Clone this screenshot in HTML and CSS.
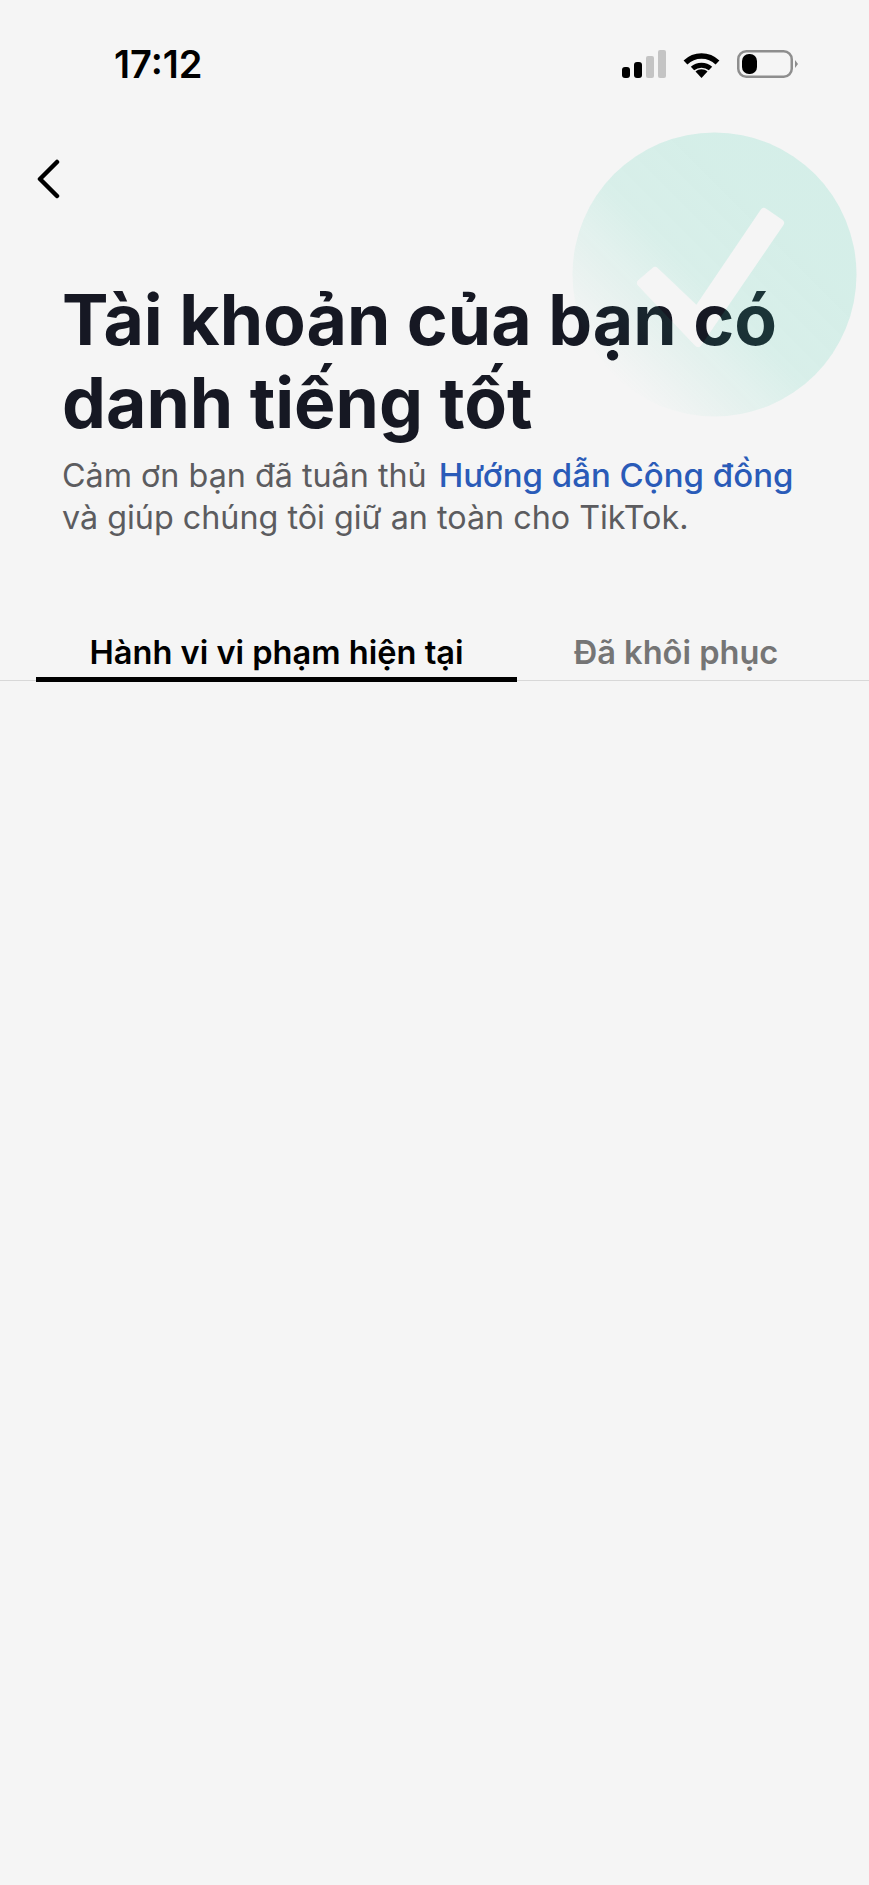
FILE: index.html
```html
<!DOCTYPE html>
<html lang="vi">
<head>
  <meta charset="UTF-8" />
  <title>Tài khoản của bạn có danh tiếng tốt</title>
  <link rel="stylesheet" href="styles.css">
</head>
<body>
  <div id="statusbar">
    <span id="clock">17:12</span>
    <div id="status-icons">
      <svg class="signal" width="44" height="28" viewBox="0 0 44 28">
        <rect x="0" y="17" width="8" height="11" rx="3" fill="#000"/>
        <rect x="12" y="12" width="8" height="16" rx="3" fill="#000"/>
        <rect x="24" y="6" width="8" height="22" rx="2" fill="#c4c4c4"/>
        <rect x="36" y="0" width="8" height="28" rx="2" fill="#c4c4c4"/>
      </svg>
      <svg class="wifi" width="37" height="27" viewBox="0 0 37 27">
        <path d="M2.5 11.5C11.5 2.8 25.500 2.8 34.500 11.500" fill="none" stroke="#000" stroke-width="5.500"/>
        <path d="M9.500 17.500C14.500 13 22.500 13 27.500 17.500" fill="none" stroke="#000" stroke-width="5"/>
        <path d="M12.500 20.500C16 17.500 21 17.500 24.500 20.500L18.500 27Z" fill="#000"/>
      </svg>
      <svg class="battery" width="62" height="28" viewBox="0 0 62 28">
        <rect x="1.250" y="1.250" width="53.500" height="25.500" rx="8" fill="none" stroke="#8e8e8e" stroke-width="2.500"/>
        <rect x="5" y="4" width="15" height="20" rx="7" fill="#000"/>
        <path d="M58 10L61 14L58 18Z" fill="#8e8e8e"/>
      </svg>
    </div>
  </div>

  <button id="back" aria-label="Quay lại">
    <svg width="24" height="40" viewBox="0 0 24 40">
      <path d="M21 3L4 20L21 37" fill="none" stroke="#000" stroke-width="4.500" stroke-linecap="round" stroke-linejoin="round"/>
    </svg>
  </button>

  <div id="intro">
    <h1>Tài khoản của bạn có<br>danh tiếng tốt</h1>
    <p>Cảm ơn bạn đã tuân thủ <a href="#">Hướng dẫn Cộng đồng</a><br>và giúp chúng tôi giữ an toàn cho TikTok.</p>
  </div>

  <!-- huy hieu nam de len chu -->
  <svg id="badge" width="285" height="285" viewBox="0 0 285 285">
    <defs>
      <linearGradient id="badge-fill" x1="0.7" y1="0.3" x2="0.14" y2="0.86">
        <stop offset="0" stop-color="#3ad0ac" stop-opacity="0.17"/>
        <stop offset="0.42" stop-color="#3ad0ac" stop-opacity="0.15"/>
        <stop offset="1" stop-color="#3ad0ac" stop-opacity="0"/>
      </linearGradient>
      <mask id="badge-check">
        <rect width="285" height="285" fill="#fff"/>
        <path d="M192 80L208 91L126 211L69 151L83 139L125 179Z" fill="#000" stroke="#000" stroke-width="8" stroke-linejoin="round"/>
      </mask>
    </defs>
    <circle cx="142.500" cy="142.500" r="142" fill="url(#badge-fill)" mask="url(#badge-check)"/>
  </svg>

  <div id="tabs">
    <div class="tab active">Hành vi vi phạm hiện tại</div>
    <div class="tab">Đã khôi phục</div>
  </div>
</body>
</html>
```

FILE: styles.css
```css
html {
  font-size: 16px;
}
body {
  position: relative;
  margin: 0;
  min-height: 1885px;
  background-color: #f5f5f5;
  color: #161823;
  font-family: Inter, "Noto Sans", sans-serif;
  overflow: hidden;
}
#statusbar {
  display: flex;
  justify-content: space-between;
  align-items: center;
  height: 28px;
  padding: 50px 70px 0 114px;
}
#clock {
  font-size: 38px;
  font-weight: 600;
  line-height: 28px;
  color: #000;
}
#status-icons {
  display: flex;
  align-items: center;
  gap: 17px;
}
#status-icons svg {
  display: block;
}
#back {
  display: block;
  margin: 81px 0 0 36px;
  padding: 0;
  border: 0;
  background: none;
}
#back svg {
  display: block;
}
#intro {
  padding: 79px 0 0 62px;
}
h1 {
  margin: 0;
  font-size: 69.700px;
  font-weight: 700;
  line-height: 83px;
}
#intro p {
  margin: 11px 0 0;
  font-size: 32.300px;
  line-height: 41.500px;
  color: #5c5c5f;
}
#intro a {
  margin-left: 3px;
  color: #2a5bb8;
  font-size: 33px;
  font-weight: 500;
  text-decoration: none;
}
#badge {
  position: absolute;
  left: 572px;
  top: 132px;
}
#tabs {
  display: flex;
  margin-top: 93px;
  padding: 0 34px 0 36px;
  border-bottom: 1px solid #d8d8d8;
}
.tab {
  height: 49px;
  padding-top: 1px;
  box-sizing: border-box;
  font-size: 32.600px;
  font-weight: 600;
  line-height: 40px;
  text-align: center;
  color: #757575;
  flex: 318;
}
.tab.active {
  flex: 481;
  color: #000;
  box-shadow: inset 0 -5px 0 #000;
  margin-bottom: -2px;
  height: 51px;
}
```
